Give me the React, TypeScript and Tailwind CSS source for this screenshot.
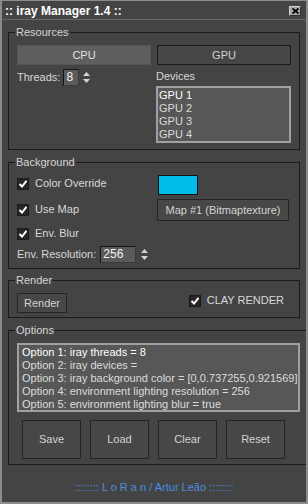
import React from "react";

const Tri = ({ up }: { up?: boolean }) => (
  <svg width="7" height="4" viewBox="0 0 7 4">
    <path d={up ? "M0 4 L3.5 0 L7 4 Z" : "M0 0 L3.5 4 L7 0 Z"} fill="#d4d4d4" />
  </svg>
);

function Spinner({ value, w, gap }: { value: string; w: string; gap: string }) {
  return (
    <div className="flex items-center">
      <div
        className={`${w} h-[17px] bg-[#5a5a5a] border border-[#141414] border-r-[#3a3a3a] border-b-[#3a3a3a] text-[12px] leading-[15px] pl-[2px] text-[#f2f2f2]`}
      >
        {value}
      </div>
      <div className={`${gap} w-[10px] h-[17px] flex flex-col items-center justify-center gap-[3px]`}>
        <Tri up />
        <Tri />
      </div>
    </div>
  );
}

function Check({ label }: { label: string }) {
  return (
    <div className="flex items-center gap-[6px] leading-[13px]">
      <span className="w-[12px] h-[12px] bg-[#262626] border border-[#1a1a1a] flex items-center justify-center">
        <svg width="10" height="10" viewBox="0 0 10 10">
          <path d="M1.5 5 L4 7.5 L8.5 1.8" stroke="#ffffff" strokeWidth="2" fill="none" />
        </svg>
      </span>
      <span>{label}</span>
    </div>
  );
}

const legendCls = "ml-[-2px] px-[1px] leading-[13px] text-[#d4d4d4]";
const fsCls = "border border-[#1b1b1b] pl-[8px] pr-[8px]";
const btnCls =
  "bg-[#474747] border border-[#242424] flex items-center justify-center text-[#d2d2d2]";

export default function App() {
  return (
    <div className="w-[308px] h-[504px] bg-[#444444] border-t border-x-2 border-b-2 border-[#8c8c8c] flex flex-col font-['Liberation_Sans',Arial,sans-serif] text-[11px] text-[#d8d8d8] overflow-hidden">
      {/* Title bar */}
      <div className="h-[19px] shrink-0 border-b border-[#666666] flex items-start justify-between">
        <div className="pl-[3px] pt-[3px] text-[12px] leading-[14px] font-bold text-white">
          :: iray Manager 1.4 ::
        </div>
        <div className="mt-[5px] mr-[5px] w-[12px] h-[10px] bg-[#a8a8a8] border border-[#d0d0d0] border-r-[#303030] border-b-[#303030] flex items-center justify-center">
          <svg width="7" height="6" viewBox="0 0 7 6">
            <path d="M0.5 0.5 L6.5 5.5 M6.5 0.5 L0.5 5.5" stroke="#000" strokeWidth="1.8" />
          </svg>
        </div>
      </div>

      <div className="flex-1 flex flex-col px-[6px]">
        {/* Resources */}
        <fieldset className={`mt-[6px] pt-[6px] pb-[6px] ${fsCls}`}>
          <legend className={legendCls}>Resources</legend>
          <div className="flex gap-[6px]">
            <div className="w-[134px] h-[20px] bg-[#5f5f5f] border border-[#555555] flex items-center justify-center text-[#e2e2e2]">
              CPU
            </div>
            <div className="flex-1 h-[20px] bg-[#464646] border border-[#1a1a1a] flex items-center justify-center text-[#d2d2d2]">
              GPU
            </div>
          </div>
          <div className="flex mt-[4px]">
            <div className="w-[139px] flex items-start">
              <div className="h-[17px] flex items-center gap-[3px]">
                <span>Threads:</span>
                <Spinner value="8" w="w-[16px]" gap="ml-[2px]" />
              </div>
            </div>
            <div className="flex-1 flex flex-col">
              <div className="leading-[14px]">Devices</div>
              <div className="mt-[3px] h-[57px] border-2 border-[#a0a0a0] bg-[#575757] pl-[1px] pt-[1px] leading-[13px] text-[#dcdcdc]">
                <div className="text-white">GPU 1</div>
                <div>GPU 2</div>
                <div>GPU 3</div>
                <div>GPU 4</div>
              </div>
            </div>
          </div>
        </fieldset>

        {/* Background */}
        <fieldset className={`mt-[6px] pt-[6px] pb-[5px] ${fsCls}`}>
          <legend className={legendCls}>Background</legend>
          <div className="flex h-[20px]">
            <div className="w-[141px] pt-[2px]">
              <Check label="Color Override" />
            </div>
            <div className="w-[40px] h-[20px] bg-[#00bceb] border border-[#111111]" />
          </div>
          <div className="flex h-[22px] mt-[4px] items-start">
            <div className="w-[140px] pt-[4px]">
              <Check label="Use Map" />
            </div>
            <div className={`w-[132px] h-[22px] ${btnCls}`}>Map #1 (Bitmaptexture)</div>
          </div>
          <div className="mt-[6px] h-[13px] flex items-center">
            <Check label="Env. Blur" />
          </div>
          <div className="mt-[6px] h-[17px] flex items-center gap-[4px]">
            <span>Env. Resolution:</span>
            <Spinner value="256" w="w-[36px]" gap="ml-[3px]" />
          </div>
        </fieldset>

        {/* Render */}
        <fieldset className={`mt-[5px] pt-[6px] pb-[4px] ${fsCls}`}>
          <legend className={legendCls}>Render</legend>
          <div className="flex items-start justify-between">
            <div className={`w-[50px] h-[20px] ${btnCls}`}>Render</div>
            <div className="mt-[1px] mr-[7px]">
              <Check label="CLAY RENDER" />
            </div>
          </div>
        </fieldset>

        {/* Options */}
        <fieldset className={`mt-[6px] pt-[6px] pb-[5px] ${fsCls}`}>
          <legend className={legendCls}>Options</legend>
          <div className="h-[69px] border-2 border-[#a0a0a0] bg-[#575757] pl-[3px] pt-[1px] leading-[13px] overflow-hidden whitespace-nowrap text-[#dcdcdc]">
            <div className="text-white">Option 1: iray threads = 8</div>
            <div>Option 2: iray devices =</div>
            <div>Option 3: iray background color = [0,0.737255,0.921569]</div>
            <div>Option 4: environment lighting resolution = 256</div>
            <div>Option 5: environment lighting blur = true</div>
          </div>
          <div className="mt-[8px] pl-[5px] flex gap-[9px]">
            <div className={`w-[59px] h-[39px] ${btnCls}`}>Save</div>
            <div className={`w-[59px] h-[39px] ${btnCls}`}>Load</div>
            <div className={`w-[59px] h-[39px] ${btnCls}`}>Clear</div>
            <div className={`w-[59px] h-[39px] ${btnCls}`}>Reset</div>
          </div>
        </fieldset>

        {/* Footer */}
        <div className="flex-1 pt-[8px] flex items-center justify-center text-[#4a8fe0]">
          :::::::: L o R a n / Artur Leão ::::::::
        </div>
      </div>
    </div>
  );
}
